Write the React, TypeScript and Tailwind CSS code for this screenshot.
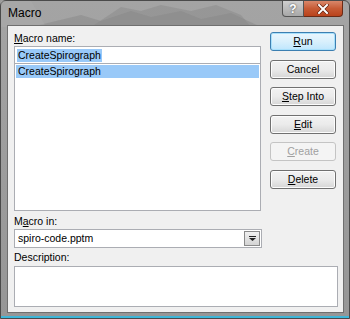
import React from "react";

const font = { fontFamily: '"Liberation Sans", Arial, sans-serif' };

function U({ children }: { children: React.ReactNode }) {
  return <span className="underline underline-offset-1">{children}</span>;
}

function Btn({ children, primary, disabled }: { children: React.ReactNode; primary?: boolean; disabled?: boolean }) {
  return (
    <div
      className={`h-[19px] w-[66px] rounded-[3px] border flex items-center justify-center text-[10.5px] leading-none ${
        disabled
          ? "border-[#c4c4c4] bg-[#f4f4f4] text-[#a0a0a0]"
          : primary
          ? "border-[#3c7fb1] bg-gradient-to-b from-[#eaf6fd] via-[#d9f0fc] to-[#bee6fd] text-black shadow-[inset_0_0_0_1px_#a8e0fb]"
          : "border-[#707070] bg-gradient-to-b from-[#f2f2f2] via-[#ebebeb] to-[#d6d6d6] text-black shadow-[inset_0_0_0_1px_#fcfcfc]"
      }`}
    >
      {children}
    </div>
  );
}

export default function App() {
  return (
    <div className="w-[350px] h-[319px] overflow-hidden bg-[#9c9c9c]" style={font}>
      <div className="relative w-[350px] h-[319px] rounded-t-[6px] border border-[#4a4a4a] bg-gradient-to-b from-[#a4a4a4] to-[#969696] shadow-[inset_0_-2px_0_#3fb6d8]">
        {/* glass reflections */}
        <svg className="absolute left-0 top-0" width="350" height="26" viewBox="0 0 350 26">
          <polygon points="90,26 120,6 140,10 160,4 190,10 215,4 240,14 250,26" fill="#8c8c8c" opacity="0.55" />
          <polygon points="30,26 80,14 100,20 130,10 150,16 180,10 200,18 230,12 260,26" fill="#878787" opacity="0.5" />
          <polygon points="0,0 30,0 45,26 0,26" fill="#b0b0b0" opacity="0.35" />
        </svg>

        {/* title bar */}
        <div className="relative h-[24px] flex items-start">
          <span className="pl-[7px] pt-[6px] text-[12px] leading-none text-black">Macro</span>
          <div className="ml-auto mr-[6px] flex">
            <div className="w-[22px] h-[16px] rounded-bl-[4px] border border-[#555] border-t-0 bg-gradient-to-b from-[#cfcfcf] to-[#a8a8a8] flex items-center justify-center text-white text-[12px] font-bold leading-none [text-shadow:0_0_2px_#333]">
              ?
            </div>
            <div className="w-[39px] h-[16px] rounded-br-[4px] border border-[#6b2a15] border-t-0 border-l-0 bg-gradient-to-b from-[#d9876a] via-[#c75b35] to-[#b9421b] flex items-center justify-center">
              <svg width="12" height="10" viewBox="0 0 12 10">
                <path d="M2 1 L10 9 M10 1 L2 9" stroke="#5a1a08" strokeWidth="3.2" strokeLinecap="square" />
                <path d="M2 1 L10 9 M10 1 L2 9" stroke="#ffffff" strokeWidth="2" strokeLinecap="square" />
              </svg>
            </div>
          </div>
        </div>

        {/* client area */}
        <div className="relative ml-[6px] mr-[5px] h-[288px] border border-[#6f6f6f] bg-[#f0f0f0] px-[6px] text-[10.5px] text-black">
          <div className="flex pt-[5px]">
            <div className="w-[247px] flex flex-col">
              <div className="h-[15px] leading-[15px]"><U>M</U>acro name:</div>
              <div className="h-[18px] border border-[#abadb3] bg-white flex items-center px-[2px]">
                <span className="bg-[#99c9f8] px-[1px] leading-[13px]">CreateSpirograph</span>
              </div>
              <div className="h-[147px] border border-[#abadb3] border-t-0 bg-white p-[1px]">
                <div className="h-[13px] bg-[#99c9f8] pl-[2px] leading-[13px]">CreateSpirograph</div>
              </div>
            </div>
            <div className="ml-[9px] pt-[1px] flex flex-col gap-[8.5px]">
              <Btn primary><U>R</U>un</Btn>
              <Btn>Cancel</Btn>
              <Btn><U>S</U>tep Into</Btn>
              <Btn><U>E</U>dit</Btn>
              <Btn disabled><U>C</U>reate</Btn>
              <Btn><U>D</U>elete</Btn>
            </div>
          </div>

          <div className="mt-[2px] h-[16px] leading-[16px]">M<U>a</U>cro in:</div>
          <div className="w-[248px] h-[19px] border border-[#abadb3] bg-white flex items-center pl-[3px] pr-[1px]">
            <span className="flex-1">spiro-code.pptm</span>
            <div className="w-[16px] h-[15px] border border-[#8a8a8a] bg-gradient-to-b from-[#f0f0f0] to-[#d4d4d4] flex items-center justify-center">
              <svg width="7" height="5" viewBox="0 0 7 5">
                <rect x="0" y="0" width="7" height="1" fill="#222" />
                <polygon points="0,2 7,2 3.5,5" fill="#222" />
              </svg>
            </div>
          </div>
          <div className="mt-[1px] h-[17px] leading-[17px]">Description:</div>
          <div className="w-[324px] h-[41px] border border-[#abadb3] bg-white" />
        </div>
      </div>
    </div>
  );
}
